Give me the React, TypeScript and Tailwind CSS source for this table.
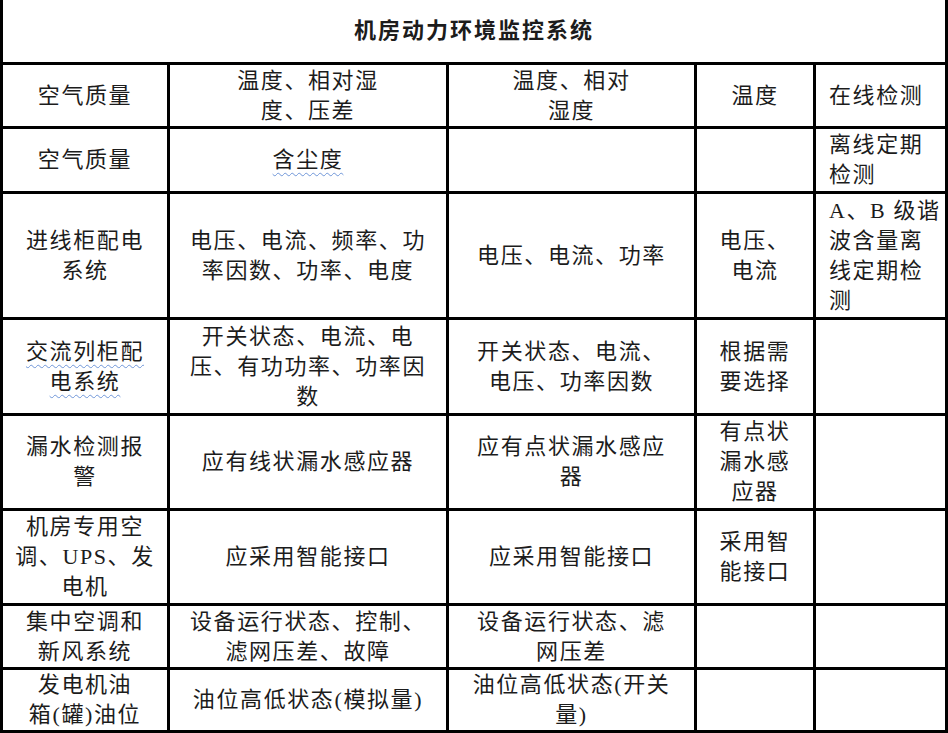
const cell = "bg-white flex flex-col justify-center items-center text-center"
const cellLeft = "bg-white flex flex-col justify-center items-start text-left pl-[13px]"
const wavy = "underline decoration-wavy decoration-[#6f96d8] decoration-1 underline-offset-[5px]"

const App = () => {
    return (
        <div className="w-[948px] h-[733px] bg-white font-['Liberation_Serif','Noto_Sans_CJK_SC',serif] text-[#1c1c1c] text-[22px] leading-[30px] tracking-[1.6px]">
            <div className="grid grid-cols-[164px_276px_245px_116px_129px] grid-rows-[62px_61px_62px_123px_93px_92px_92px_61px_60px] gap-[3px] bg-black px-[3px] pb-[3px] w-[948px] h-[733px]">
                {/* title row */}
                <div className={`${cell} col-span-5 font-bold tracking-[2px]`}>机房动力环境监控系统</div>

                {/* row 1 */}
                <div className={cell}>空气质量</div>
                <div className={cell}>温度、相对湿<br />度、压差</div>
                <div className={cell}>温度、相对<br />湿度</div>
                <div className={cell}>温度</div>
                <div className={cellLeft}>在线检测</div>

                {/* row 2 */}
                <div className={cell}>空气质量</div>
                <div className={cell}><span className={wavy}>含尘度</span></div>
                <div className={cell}></div>
                <div className={cell}></div>
                <div className={cellLeft}>离线定期<br />检测</div>

                {/* row 3 */}
                <div className={cell}>进线柜配电<br />系统</div>
                <div className={cell}>电压、电流、频率、功<br />率因数、功率、电度</div>
                <div className={cell}>电压、电流、功率</div>
                <div className={cell}>电压、<br />电流</div>
                <div className={cellLeft}>A、B 级谐<br />波含量离<br />线定期检<br />测</div>

                {/* row 4 */}
                <div className={cell}>
                    <span className={wavy}>交流列柜配</span>
                    <span className={wavy}>电系统</span>
                </div>
                <div className={cell}>开关状态、电流、电<br />压、有功功率、功率因<br />数</div>
                <div className={cell}>开关状态、电流、<br />电压、功率因数</div>
                <div className={cell}>根据需<br />要选择</div>
                <div className={cellLeft}></div>

                {/* row 5 */}
                <div className={cell}>漏水检测报<br />警</div>
                <div className={cell}>应有线状漏水感应器</div>
                <div className={cell}>应有点状漏水感应<br />器</div>
                <div className={cell}>有点状<br />漏水感<br />应器</div>
                <div className={cellLeft}></div>

                {/* row 6 */}
                <div className={cell}>机房专用空<br />调、UPS、发<br />电机</div>
                <div className={cell}>应采用智能接口</div>
                <div className={cell}>应采用智能接口</div>
                <div className={cell}>采用智<br />能接口</div>
                <div className={cellLeft}></div>

                {/* row 7 */}
                <div className={cell}>集中空调和<br />新风系统</div>
                <div className={cell}>设备运行状态、控制、<br />滤网压差、故障</div>
                <div className={cell}>设备运行状态、滤<br />网压差</div>
                <div className={cell}></div>
                <div className={cellLeft}></div>

                {/* row 8 */}
                <div className={cell}>发电机油<br />箱(罐)油位</div>
                <div className={cell}>油位高低状态(模拟量)</div>
                <div className={cell}>油位高低状态(开关<br />量)</div>
                <div className={cell}></div>
                <div className={cellLeft}></div>
            </div>
        </div>
    )
}

export default App
